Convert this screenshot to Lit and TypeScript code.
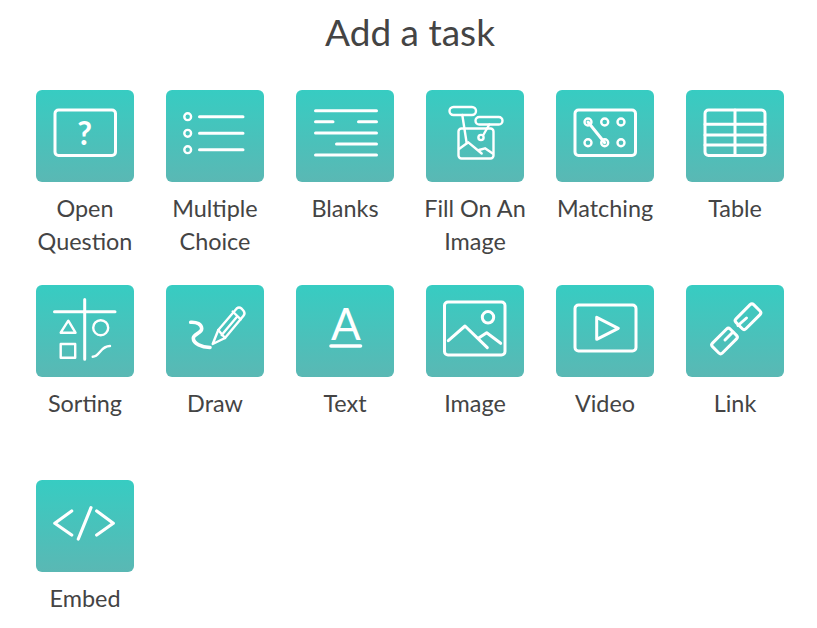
import { LitElement, css, html, svg } from 'lit';
import { customElement } from 'lit/decorators.js';

const frame = svg`<rect x="19" y="20" width="60.5" height="45.5" rx="3.5" />`;

const tasks = [
  {
    label: 'Open Question',
    icon: svg`${frame}<text class="glyph bold" x="48.7" y="55" font-size="32">?</text>`,
  },
  {
    label: 'Multiple Choice',
    icon: svg`
      <circle class="thin" cx="21.7" cy="26.7" r="3.4" />
      <circle class="thin" cx="21.7" cy="43.3" r="3.4" />
      <circle class="thin" cx="21.7" cy="59.7" r="3.4" />
      <path d="M33.5 26.7H77M33.5 43.3H77M33.5 59.7H77" />`,
  },
  {
    label: 'Blanks',
    icon: svg`<path d="M19.5 20.7H80.5M19.5 31.7H37M62.5 31.7H80.5M19.5 43H80.5M40.5 54H80.5M19.5 65H80.5" />`,
  },
  {
    label: 'Fill On An Image',
    icon: svg`
      <g class="thin">
        <rect x="23.5" y="17" width="26.5" height="8" rx="4" />
        <rect x="49.5" y="27" width="27" height="7.5" rx="3.75" />
        <rect x="32.5" y="38.5" width="35" height="30" rx="3" />
        <path d="M36.3 25L40.7 53.3M63.3 34.5L57.3 45" />
        <circle cx="55" cy="47.5" r="2.6" />
        <path d="M33 59L42.3 52.3L55.7 63.5M53 60L59 58.3L66.7 63.5" />
      </g>`,
  },
  {
    label: 'Matching',
    icon: svg`${frame}
      <g class="thin">
        <circle cx="32" cy="32" r="3.5" />
        <circle cx="48.7" cy="32" r="3.5" />
        <circle cx="65" cy="32" r="3.5" />
        <circle cx="32" cy="52.7" r="3.5" />
        <circle cx="48.7" cy="52.7" r="3.5" />
        <circle cx="65" cy="52.7" r="3.5" />
      </g>
      <path d="M32 32L48.7 52.7" />`,
  },
  {
    label: 'Table',
    icon: svg`
      <rect x="19" y="20" width="60" height="45.5" rx="3.5" />
      <path d="M49 20V65.5M19 34.3H79M19 45H79M19 55H79" />`,
  },
  {
    label: 'Sorting',
    icon: svg`
      <path d="M18.5 26.7H79M48.7 14.5V74.3" />
      <g class="thin">
        <path d="M32.3 35.7L24.7 47.7H39.5Z" />
        <rect x="24.7" y="59" width="14.5" height="13.7" />
        <circle cx="64.7" cy="42.7" r="7.5" />
        <path d="M56.7 71.7C64 71.7 64 61 74 61" />
      </g>`,
  },
  {
    label: 'Draw',
    icon: svg`
      <path class="thick" d="M24.7 37.3C31 37 35.5 39 35.7 43.5C36 48 27.5 49 27.3 53C27.2 59 36 62 44 62.5" />
      <path class="thin" d="M46.7 59L52.3 45L70.7 23.5Q73 21.5 75.5 23.5L77.5 25.7Q79.5 28.2 77.5 30.7L59 53Z" />
      <path class="thin" d="M66.7 26.5L74.7 34.3M55.7 50L71 31.7M52.3 45L59 53" />`,
  },
  {
    label: 'Text',
    icon: svg`
      <text class="glyph" x="50" y="55" font-size="44">A</text>
      <path class="thick" d="M35 61H64.5" />`,
  },
  {
    label: 'Image',
    icon: svg`
      <rect x="18.5" y="17" width="60.5" height="53" rx="3.5" />
      <circle cx="62" cy="32.3" r="5.7" />
      <path d="M22.3 55.7L39 41L61.3 62.7M52.3 53.3L60.7 47.7L74.7 58.3" />`,
  },
  {
    label: 'Video',
    icon: svg`
      <rect x="19" y="20" width="61" height="46" rx="3.5" />
      <path d="M40.7 32.3V54.3L62.3 43.3Z" />`,
  },
  {
    label: 'Link',
    icon: svg`
      <rect x="-12.5" y="-7" width="25" height="14" rx="2.5" transform="translate(62 31.7) rotate(-45)" />
      <rect x="-12.5" y="-7" width="25" height="14" rx="2.5" transform="translate(38.5 56) rotate(-45)" />
      <path d="M39 55L47 47M52 40.5L60.5 33" />`,
  },
  {
    label: 'Embed',
    icon: svg`<path class="wide" d="M35.7 31L18.8 43.3L35.7 55M60.7 31L77.3 43.3L60.7 55M55 27.7L42.3 59" />`,
  },
];

@customElement('app-root')
export class AppRoot extends LitElement {
  static styles = css`
    :host {
      display: block;
      width: 817px;
      height: 628px;
      background: #ffffff;
      color: #444444;
      font-family: Lato, 'Open Sans', sans-serif;
      overflow: hidden;
    }
    .title {
      margin: 0;
      padding: 10px 0 0 3px;
      height: 90px;
      box-sizing: border-box;
      text-align: center;
      font-size: 37px;
      font-weight: 400;
      line-height: 44px;
    }
    .tasks {
      display: grid;
      grid-template-columns: repeat(6, 130px);
      grid-auto-rows: 195px;
      padding-left: 20px;
    }
    .task {
      display: flex;
      flex-direction: column;
      align-items: center;
    }
    .tile {
      width: 98px;
      height: 92px;
      flex: none;
      border-radius: 6px;
      background: linear-gradient(180deg, #37ccc2 0%, #5ab8b4 100%);
    }
    .tile svg {
      display: block;
      fill: none;
      stroke: #ffffff;
      stroke-width: 3;
      stroke-linecap: round;
      stroke-linejoin: round;
    }
    .tile .thin {
      stroke-width: 2.4;
    }
    .tile .thick {
      stroke-width: 3.6;
    }
    .tile .wide {
      stroke-width: 3.2;
    }
    .tile .glyph {
      fill: #ffffff;
      stroke: none;
      font-family: Lato, sans-serif;
      text-anchor: middle;
    }
    .tile .bold {
      font-weight: 700;
    }
    .label {
      margin-top: 10px;
      text-align: center;
      font-size: 23.4px;
      line-height: 33px;
    }
  `;

  render() {
    return html`
      <h1 class="title">Add a task</h1>
      <div class="tasks">
        ${tasks.map(
          task => html`
            <div class="task">
              <div class="tile">
                <svg width="98" height="92" viewBox="0 0 98 92">${task.icon}</svg>
              </div>
              <div class="label">${task.label}</div>
            </div>
          `,
        )}
      </div>
    `;
  }
}
